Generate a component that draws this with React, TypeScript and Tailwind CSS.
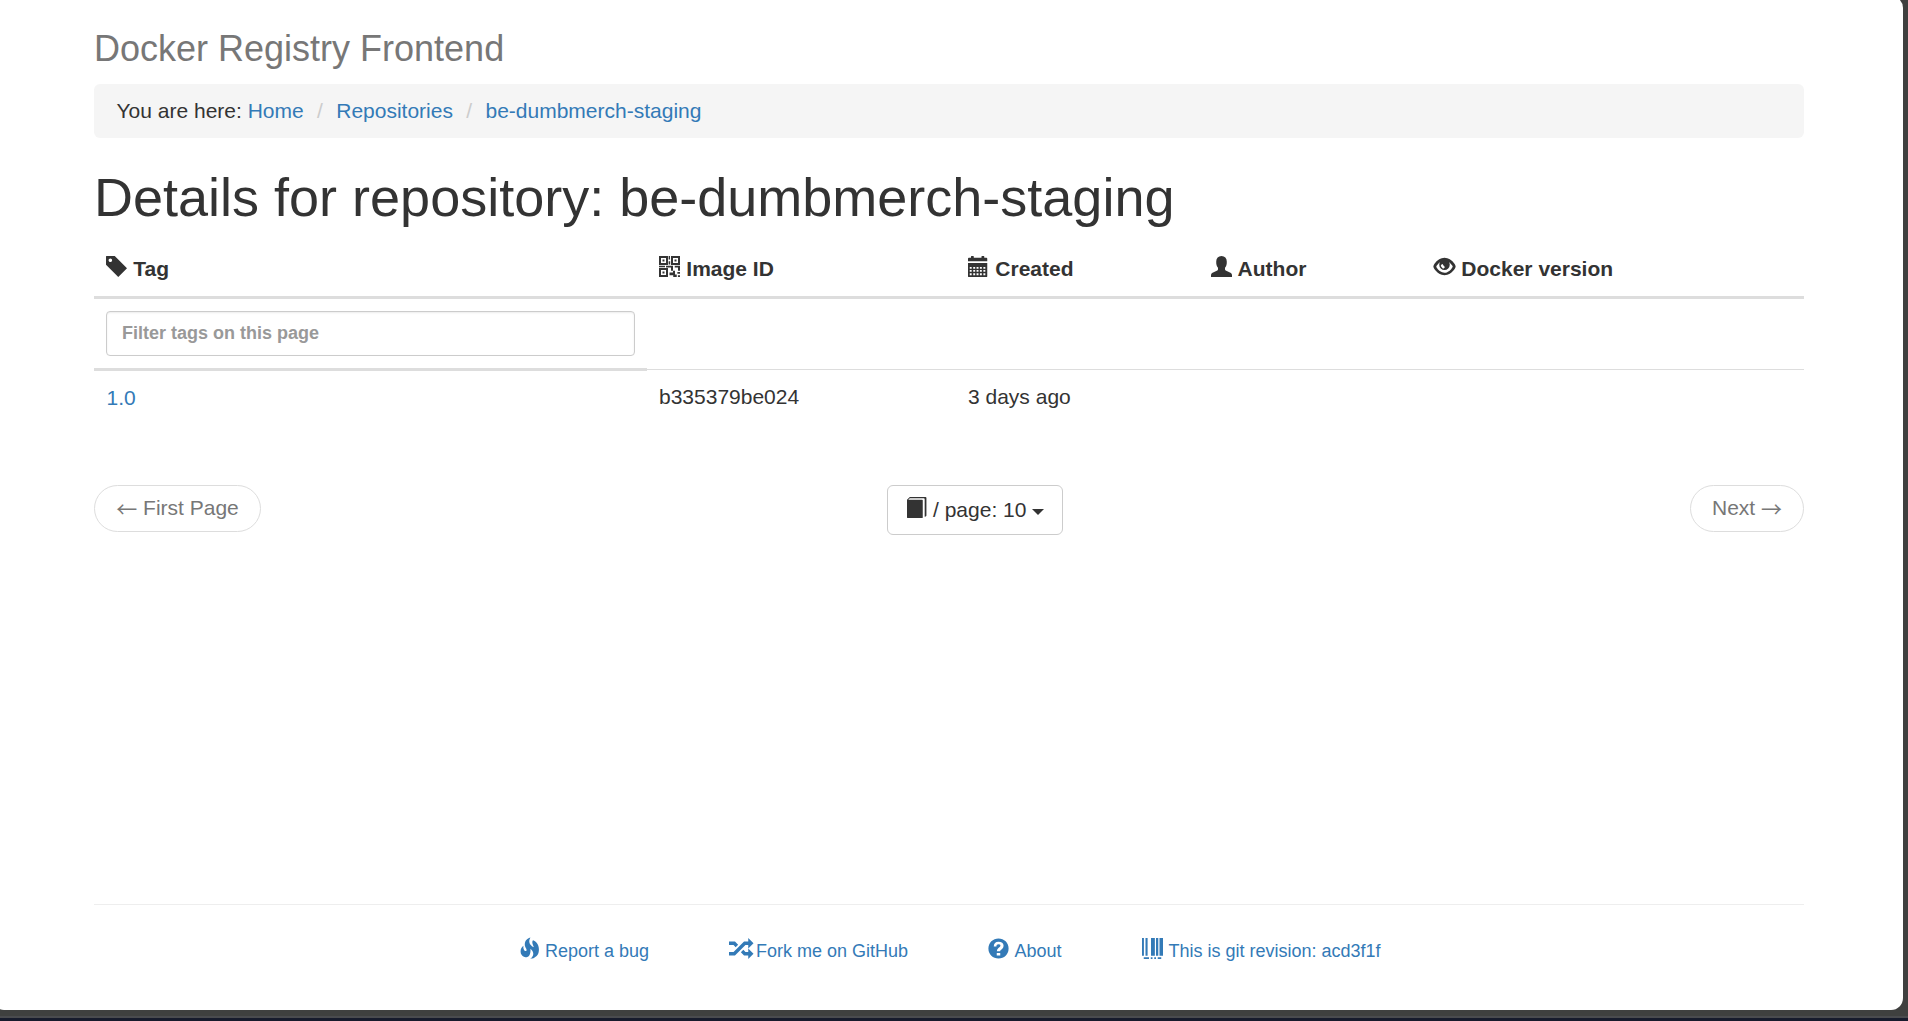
import type { ReactNode } from 'react';

type GlyphProps = { d: string; width?: number; className?: string };

// Glyphs are drawn on a 1200-unit em with the y axis pointing up.
function Glyph({ d, width = 1200, className = 'mr-[0.5px] w-[21px] align-[-1px]' }: GlyphProps) {
  return (
    <svg
      viewBox={`0 0 ${width} 1200`}
      className={`inline-block h-[21px] shrink-0 overflow-visible ${className}`}
      fill="currentColor"
      fillRule="evenodd"
      aria-hidden="true"
    >
      <path transform="matrix(1 0 0 -1 0 1200)" d={d} />
    </svg>
  );
}

const TAG =
  'M1 700v475q0 10 7.5 17.5t17.5 7.5h474l700 -700l-500 -500zM148 953q0 -42 29 -71q30 -30 71.5 -30t71.5 30q29 29 29 71t-29 71q-30 30 -71.5 30t-71.5 -30q-29 -29 -29 -71z';
const QR =
  'M0 1200h514v-514h-514zM114 1086v-286h286v286zM200 1000h114v-114h-114zM686 1200h514v-514h-514zM800 1086v-286h286v286zM886 1000h114v-114h-114zM0 514h514v-514h-514zM114 400v-286h286v286zM200 314h114v-114h-114zM550 1200h80v-200h-80zM550 900h90v-180h-90zM0 640h343v-80h-343zM400 640h400v-280h-114v190h-286zM900 640h300v-280h-114v180h-186zM600 260h200v100h114v-220h100v-140h-200v100h-214zM1080 100h120v-100h-120zM1050 290h150v-100h-150z';
const CALENDAR =
  'M200 1200h100q30 0 30 -40v-60h440v60q0 40 30 40h100q30 0 30 -40v-60h120q50 0 50 -50v-150h-1100v150q0 50 50 50h120v60q0 40 30 40zM0 800h1100v-750q0 -50 -50 -50h-1000q-50 0 -50 50zM100 570v-95h110v95zM300 570v-95h110v95zM490 570v-95h110v95zM680 570v-95h110v95zM880 570v-95h110v95zM100 400v-105h110v105zM300 400v-105h110v105zM490 400v-105h110v105zM680 400v-105h110v105zM880 400v-105h110v105zM100 215v-110h110v110zM300 215v-110h110v110zM490 215v-110h110v110zM680 215v-110h110v110zM880 215v-110h110v110z';
const USER =
  'M600 1200q140 0 220 -90t80 -210v-120q0 -60 -30 -130q-20 -60 -70 -120v-90q0 -50 40 -70l300 -140q60 -40 60 -130v-100h-1200v100q0 90 60 130l300 140q40 20 40 70v90q-50 60 -70 120q-30 70 -30 130v120q0 120 80 210t220 90z';
const EYE =
  'M600 1094q82 0 160.5 -22.5t140 -59t116.5 -82.5t94.5 -95t68 -95t42.5 -82.5t14 -57.5t-14 -57.5t-43 -82.5t-68.5 -95t-94.5 -95t-116.5 -82.5t-140 -59t-159.5 -22.5t-159.5 22.5t-140 59t-116.5 82.5t-94.5 95t-68.5 95t-43 82.5t-14 57.5t14 57.5t42.5 82.5t68 95t94.5 95t116.5 82.5t140 59t160.5 22.5zM888 829q-15 15 -18 12t5 -22q25 -57 25 -119q0 -124 -88 -212t-212 -88t-212 88t-88 212q0 59 23 114q8 19 4.5 22t-17.5 -12q-70 -69 -160 -184q-13 -16 -15 -40.5t9 -42.5q22 -36 47 -71t70 -82t92.5 -81t113 -58.5t133.5 -24.5t133.5 24t113 58.5t92.5 81.5t70 81.5t47 70.5q11 18 9 42.5t-14 41.5q-90 117 -163 189zM448 727l-35 -36q-15 -15 -19.5 -38.5t4.5 -41.5q37 -68 93 -116q16 -13 38.5 -11t36.5 17l35 34q14 15 12.5 33.5t-16.5 33.5q-44 44 -89 117q-11 18 -28 20t-32 -12z';
const BOOK =
  'M160 1200h900q50 0 50 -50v-1000q0 -40 -40 -60l-60 -20v1000q0 60 -50 60h-800l-90 -90h800q30 0 30 -30v-960q0 -50 -40 -50h-810q-50 0 -50 50v1000z';
const FIRE =
  'M653 1231q-39 -67 -54.5 -131t-10.5 -114.5t24.5 -96.5t47.5 -80t63.5 -62.5t68.5 -46.5t65 -30q-4 7 -17.5 35t-18.5 39.5t-17 39.5t-17 43t-13 42t-9.5 44.5t-2 42t4 43t13.5 39t23 38.5q96 -42 165 -107.5t105 -138t52 -156t13 -159t-19 -149.5q-13 -55 -44 -106.5t-68 -87t-78.5 -64.5t-72.5 -45t-53 -22q-72 -22 -127 -11q-31 6 -13 19q6 3 17 7q13 5 32.5 21t41 44t38.5 63.5t21.5 81.5t-6.5 94.5t-50 107t-104 115.5q10 -104 -0.5 -189t-37 -140.5t-65 -93t-84 -52t-93.5 -11t-95 24.5q-80 36 -131.5 114t-53.5 171q-2 23 0 49.5t4.5 52.5t13.5 56t27.5 60t46 64.5t69.5 68.5q-8 -53 -5 -102.5t17.5 -90t34 -68.5t44.5 -39t49 -2q31 13 38.5 36t-4.5 55t-29 64.5t-36 75t-26 75.5q-15 85 2 161.5t53.5 128.5t85.5 92.5t93.5 61t81.5 25.5z';
const RANDOM =
  'M0 200v200h259l600 600h241v198l300 -295l-300 -300v197h-159l-600 -600h-341zM0 800h259l122 -122l141 142l-181 180h-341v-200zM678 381l141 142l122 -123h159v198l300 -295l-300 -300v197h-241z';
const QUESTION =
  'M600 1177q117 0 224 -45.5t184.5 -123t123 -184.5t45.5 -224t-45.5 -224t-123 -184.5t-184.5 -123t-224 -45.5t-224 45.5t-184.5 123t-123 184.5t-45.5 224t45.5 224t123 184.5t184.5 123t224 45.5zM600 980q-130 0 -200 -70t-70 -190h150q0 60 30 95t90 35q50 0 80 -20t30 -65q0 -35 -25 -60l-90 -70q-90 -65 -90 -185h190q0 40 40 70l70 55q85 70 85 185q0 105 -80 162t-210 58zM500 350v-150h200v150z';
const BARCODE =
  'M0 190h110v1010h-110zM200 190h120v1010h-120zM515 190h220v1010h-220zM800 190h130v1010h-130zM1000 190h200v1010h-200zM100 100h300v-100h-300zM500 100h100v-100h-100zM700 100h100v-100h-100zM900 100h200v-100h-200z';

function Crumb({ children }: { children: ReactNode }) {
  return (
    <li className="inline">
      {' '}
      <span className="px-[7.5px] text-[#ccc]">{'/\u00a0'}</span>
      <a className="text-[#337ab7]">{children}</a>
    </li>
  );
}

function Heading({ glyph, children }: { glyph: string; children: ReactNode }) {
  return (
    <div className="p-3 font-bold">
      <Glyph d={glyph} /> {children}
    </div>
  );
}

function Arrow({ children }: { children: string }) {
  return (
    <span className="relative top-[2px] font-['Noto_Sans_CJK_JP',sans-serif] leading-none">{children}</span>
  );
}

const COLUMNS = 'grid grid-cols-[553px_309px_243px_223px_1fr]';

export default function App() {
  return (
    <div className="flex h-[1021px] w-full flex-col overflow-hidden bg-[#3f403f] font-['Liberation_Sans',Arial,sans-serif] text-[21px] leading-[30px] text-[#333]">
      <div className="-mt-1 mr-[5px] -ml-2 flex h-[1014px] shrink-0 flex-col rounded-[12px] bg-white pt-[33px] pr-[99px] pl-[102px]">
        <h3 className="h-[55px] text-[36px] leading-[40px] text-[#777]">Docker Registry Frontend</h3>

        <ol className="h-[54px] rounded-[6px] bg-[#f5f5f5] px-[22.5px] py-3">
          <li className="inline">
            You are here: <a className="text-[#337ab7]">Home</a>
          </li>
          <Crumb>Repositories</Crumb>
          <Crumb>be-dumbmerch-staging</Crumb>
        </ol>

        <h1 className="mt-[29px] h-[75px] text-[54px] leading-[60px]">
          Details for repository: be-dumbmerch-staging
        </h1>

        <div className="h-[243px]">
          <div className={`${COLUMNS} border-b-3 border-[#ddd]`}>
            <Heading glyph={TAG}>Tag</Heading>
            <Heading glyph={QR}>Image ID</Heading>
            <Heading glyph={CALENDAR}>Created</Heading>
            <Heading glyph={USER}>Author</Heading>
            <Heading glyph={EYE}>Docker version</Heading>
          </div>
          <div className="flex">
            <div className="w-[553px] border-b-3 border-[#ddd] p-3">
              <input
                type="text"
                placeholder="Filter tags on this page"
                className="block h-[45px] w-full rounded-[4px] border border-[#ccc] px-[15px] text-[18px] font-bold shadow-[inset_0_1px_2px_rgba(0,0,0,0.075)] placeholder:text-[#999]"
              />
            </div>
            <div className="mb-px flex-1 border-b border-[#ddd]" />
          </div>
          <div className={COLUMNS}>
            <div className="p-3 pl-[12.5px]">
              <a className="text-[#337ab7]">1.0</a>
            </div>
            <div className="-mt-px p-3">b335379be024</div>
            <div className="-mt-px p-3">3 days ago</div>
          </div>
        </div>

        <div className="flex h-[419px] items-start justify-between text-[#777]">
          <a className="h-[47px] w-[167px] rounded-full border border-[#ddd] pt-[7px] text-center">
            <Arrow>←</Arrow> First Page
          </a>
          <button className="-ml-px flex h-[50px] w-[176px] items-center rounded-[6px] border border-[#ccc] pl-[19px] text-[#333]">
            <Glyph d={BOOK} className="relative -top-[3px] w-[21px]" />
            <span className="ml-[5px]">/ page: 10</span>
            <span className="mt-[3px] ml-[6px] border-x-6 border-t-6 border-x-transparent border-t-[#333]" />
          </button>
          <a className="h-[47px] w-[114px] rounded-full border border-[#ddd] pt-[7px] text-center">
            Next <Arrow>→</Arrow>
          </a>
        </div>

        <footer className="flex border-t border-[#eee] pt-[31px] pl-[425px] text-[18px] text-[#337ab7]">
          <a className="w-[210px] whitespace-nowrap">
            <Glyph d={FIRE} className="mr-[5px] w-[21px] align-[-2px]" />
            Report a bug
          </a>
          <a className="w-[259px] whitespace-nowrap">
            <Glyph d={RANDOM} width={1400} className="mr-[2.5px] w-[24.5px] align-[-2px]" />
            Fork me on GitHub
          </a>
          <a className="w-[154px] whitespace-nowrap">
            <Glyph d={QUESTION} className="mr-[5.5px] w-[21px] align-[-2px]" />
            About
          </a>
          <a className="whitespace-nowrap">
            <Glyph d={BARCODE} className="mr-[5.5px] w-[21px] align-[-2px]" />
            This is git revision: acd3f1f
          </a>
        </footer>
      </div>
      <div className="mt-[6px] h-[2px] shrink-0 bg-[#4a4b4e]" />
      <div className="h-[3px] shrink-0 bg-[#171b2c]" />
    </div>
  );
}
